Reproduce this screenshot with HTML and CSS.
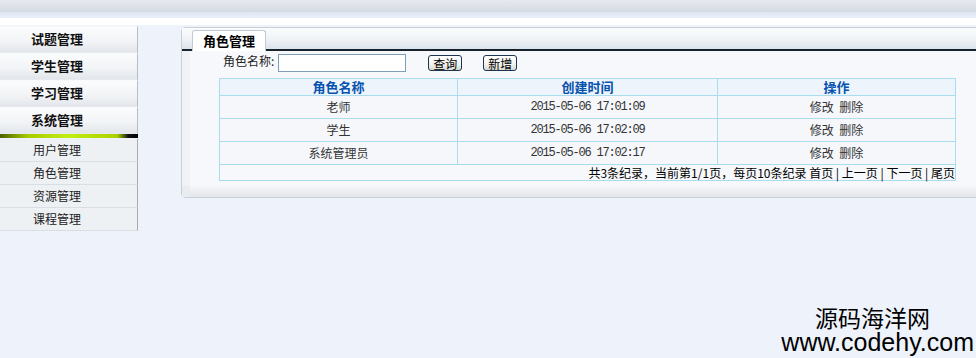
FILE: index.html
```html
<!DOCTYPE html>
<html lang="zh-CN">
<head>
    <meta charset="UTF-8">
    <title>角色管理</title>
    <link rel="stylesheet" href="styles.css">
</head>
<body>
    <div class="top">
        <div class="top-bar"></div>
        <div class="top-line"></div>
    </div>
    <div class="layout">
        <div class="side">
            <div class="menu-item">试题管理</div>
            <div class="menu-item">学生管理</div>
            <div class="menu-item">学习管理</div>
            <div class="menu-item">系统管理</div>
            <div class="menu-bar"></div>
            <ul class="sub-menu">
                <li>用户管理</li>
                <li>角色管理</li>
                <li>资源管理</li>
                <li>课程管理</li>
            </ul>
        </div>
        <div class="main">
            <div class="panel">
                <div class="tabs">
                    <span class="tab">角色管理</span>
                </div>
                <div class="panel-body">
                    <div class="search">
                        <span class="label">角色名称:</span>
                        <input type="text" class="ipt">
                        <button class="btn btn-query">查询</button>
                        <button class="btn">新增</button>
                    </div>
                    <table class="grid">
                        <tr>
                            <th class="c1">角色名称</th>
                            <th class="c2">创建时间</th>
                            <th class="c3">操作</th>
                        </tr>
                        <tr>
                            <td>老师</td>
                            <td class="time">2015-05-06 17:01:09</td>
                            <td>修改&nbsp;&nbsp;删除</td>
                        </tr>
                        <tr>
                            <td>学生</td>
                            <td class="time">2015-05-06 17:02:09</td>
                            <td>修改&nbsp;&nbsp;删除</td>
                        </tr>
                        <tr>
                            <td>系统管理员</td>
                            <td class="time">2015-05-06 17:02:17</td>
                            <td>修改&nbsp;&nbsp;删除</td>
                        </tr>
                        <tr>
                            <td colspan="3" class="pager">共3条纪录，当前第1/1页，每页10条纪录 首页 | 上一页 | 下一页 | 尾页</td>
                        </tr>
                    </table>
                </div>
                <div class="panel-foot"></div>
            </div>
        </div>
    </div>
    <div class="mark">
        <div class="mark-cn">源码海洋网</div>
        <div class="mark-en">www.codehy.com</div>
    </div>
</body>
</html>
```

FILE: styles.css
```css
html,body{
    margin: 0;
    padding: 0;
}
body{
    width: 976px;
    height: 358px;
    overflow: hidden;
    position: relative;
    background-color: #eef2fa;
    font-family: "Noto Sans CJK SC", "Liberation Sans", sans-serif;
    font-size: 12px;
    color: #222;
}
ul{
    list-style: none;
    padding-left: 0;
    margin: 0;
}
.top{
    height: 25px;
    background-color: #fff;
}
.top-bar{
    height: 12px;
    background: linear-gradient(#e6e9ee, #d5dbe3);
}
.top-line{
    height: 6px;
    background: linear-gradient(#dfe6f1, #eaf0f9);
}
.layout{
    display: flex;
    padding-top: 1px;
}
.side{
    width: 138px;
    flex: none;
}
.menu-item{
    height: 25px;
    line-height: 24px;
    padding-left: 31px;
    font-size: 13px;
    font-weight: bold;
    color: #111;
    background: linear-gradient(#fbfcfd, #f1f3f6 60%, #e2e6ea);
    border-right: 1px solid #b9bec4;
    border-bottom: 2px solid #e6eaef;
    border-top: 1px solid #f8f9fb;
    margin-bottom: -1px;
}
.menu-bar{
    height: 4px;
    margin-bottom: 1px;
    background: linear-gradient(to right, #4a6000 0, #a6cc00 20%, #c2ee10 50%, #a8d000 85%, #111 93%, #000 100%);
}
.sub-menu li{
    height: 22px;
    line-height: 22px;
    padding-left: 33px;
    background-color: #eef1f4;
    border-bottom: 1px solid #dadee3;
    border-right: 1px solid #a9adb2;
    color: #222;
}
.main{
    flex: 1;
    padding-left: 43px;
    padding-top: 1px;
}
.panel{
    width: 800px;
    border: 1px solid #c9cfd6;
    border-radius: 4px 0 0 4px;
    background-color: #f7f8fb;
}
.tabs{
    height: 19px;
    padding-left: 10px;
    padding-top: 2px;
    background: linear-gradient(#fbfcfd, #f0f3f6 50%, #dce3eb);
    border-bottom: 2px solid #16222e;
}
.tab{
    display: inline-block;
    width: 72px;
    height: 20px;
    line-height: 20px;
    text-align: center;
    font-size: 13px;
    font-weight: bold;
    color: #000;
    background-color: #fff;
    border: 1px solid #c3c9d0;
    border-bottom: none;
    border-radius: 3px 3px 0 0;
}
.panel-body{
    padding: 2px 0 5px 37px;
    border-left: 8px solid #f0f2f6;
}
.search{
    display: flex;
    align-items: center;
    height: 20px;
    margin-bottom: 5px;
}
.label{
    margin-left: -4px;
    margin-right: 4px;
    position: relative;
    top: -3px;
}
.ipt{
    width: 126px;
    height: 16px;
    padding: 0;
    border: 1px solid #7f9db9;
    background: #fff;
}
.btn{
    height: 16px;
    padding: 0 4px;
    margin-left: 21px;
    font-family: "Noto Sans CJK SC", sans-serif;
    font-size: 12px;
    line-height: 13px;
    color: #000;
    border: 1px solid #1c3550;
    border-radius: 3px;
    background: linear-gradient(#ffffff, #f3f3ef 60%, #d8d8d0);
}
.btn-query{
    margin-left: 22px;
}
.grid{
    width: 737px;
    border-collapse: collapse;
    margin-left: -8px;
}
.grid th,.grid td{
    border: 1px solid #a9dcee;
    text-align: center;
    padding: 0;
}
.grid th{
    height: 16px;
    line-height: 16px;
    font-size: 13px;
    color: #0652b0;
    background-color: #eef4fb;
}
.grid td{
    height: 22px;
    line-height: 22px;
    color: #333;
    background-color: #f5f7fb;
}
.grid .c1{
    width: 237px;
}
.grid .c2{
    width: 259px;
}
.grid td.time{
    font-family: "Liberation Mono", monospace;
    font-size: 12px;
    letter-spacing: -1.2px;
}
.grid td.pager{
    height: 15px;
    line-height: 15px;
    text-align: right;
    color: #000;
    background-color: #f7f8fb;
}
.panel-foot{
    height: 11px;
    background: linear-gradient(#f5f6f8, #e3e6ea);
    border-left: 8px solid #e9ecf0;
}
.mark{
    position: absolute;
    right: 0;
    bottom: 4px;
    text-align: right;
    color: #000;
}
.mark-cn{
    font-size: 23px;
    line-height: 26px;
    padding-right: 46px;
}
.mark-en{
    font-family: "Liberation Sans", sans-serif;
    font-size: 25px;
    line-height: 24px;
    padding-right: 2px;
}
```
